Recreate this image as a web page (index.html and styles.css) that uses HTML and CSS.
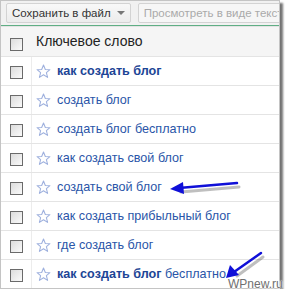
FILE: index.html
```html
<!DOCTYPE html>
<html lang="ru">
<head>
    <meta charset="UTF-8">
    <title>Ключевые слова</title>
    <link rel="stylesheet" href="styles.css">
</head>
<body>
    <div class="frame">
        <div class="toolbar">
            <button class="tool-btn">Сохранить в файл <span class="caret"></span></button>
            <button class="tool-btn tool-btn-muted">Просмотреть в виде текста</button>
        </div>
        <div class="table">
            <div class="row row-head">
                <div class="cell-check"><span class="checkbox"></span></div>
                <div class="cell-text">Ключевое слово</div>
            </div>
            <div class="row">
                <div class="cell-check"><span class="checkbox"></span></div>
                <div class="cell-text"><svg class="star" viewBox="0 0 14 14"><path d="M7 1 L8.7 5.1 L13 5.3 L9.7 8.1 L10.8 12.5 L7 10.1 L3.2 12.5 L4.3 8.1 L1 5.3 L5.3 5.1 Z"/></svg><a class="kw"><b>как создать блог</b></a></div>
            </div>
            <div class="row">
                <div class="cell-check"><span class="checkbox"></span></div>
                <div class="cell-text"><svg class="star" viewBox="0 0 14 14"><path d="M7 1 L8.7 5.1 L13 5.3 L9.7 8.1 L10.8 12.5 L7 10.1 L3.2 12.5 L4.3 8.1 L1 5.3 L5.3 5.1 Z"/></svg><a class="kw">создать блог</a></div>
            </div>
            <div class="row">
                <div class="cell-check"><span class="checkbox"></span></div>
                <div class="cell-text"><svg class="star" viewBox="0 0 14 14"><path d="M7 1 L8.7 5.1 L13 5.3 L9.7 8.1 L10.8 12.5 L7 10.1 L3.2 12.5 L4.3 8.1 L1 5.3 L5.3 5.1 Z"/></svg><a class="kw">создать блог бесплатно</a></div>
            </div>
            <div class="row">
                <div class="cell-check"><span class="checkbox"></span></div>
                <div class="cell-text"><svg class="star" viewBox="0 0 14 14"><path d="M7 1 L8.7 5.1 L13 5.3 L9.7 8.1 L10.8 12.5 L7 10.1 L3.2 12.5 L4.3 8.1 L1 5.3 L5.3 5.1 Z"/></svg><a class="kw">как создать свой блог</a></div>
            </div>
            <div class="row">
                <div class="cell-check"><span class="checkbox"></span></div>
                <div class="cell-text"><svg class="star" viewBox="0 0 14 14"><path d="M7 1 L8.7 5.1 L13 5.3 L9.7 8.1 L10.8 12.5 L7 10.1 L3.2 12.5 L4.3 8.1 L1 5.3 L5.3 5.1 Z"/></svg><a class="kw">создать свой блог</a></div>
            </div>
            <div class="row">
                <div class="cell-check"><span class="checkbox"></span></div>
                <div class="cell-text"><svg class="star" viewBox="0 0 14 14"><path d="M7 1 L8.7 5.1 L13 5.3 L9.7 8.1 L10.8 12.5 L7 10.1 L3.2 12.5 L4.3 8.1 L1 5.3 L5.3 5.1 Z"/></svg><a class="kw">как создать прибыльный блог</a></div>
            </div>
            <div class="row">
                <div class="cell-check"><span class="checkbox"></span></div>
                <div class="cell-text"><svg class="star" viewBox="0 0 14 14"><path d="M7 1 L8.7 5.1 L13 5.3 L9.7 8.1 L10.8 12.5 L7 10.1 L3.2 12.5 L4.3 8.1 L1 5.3 L5.3 5.1 Z"/></svg><a class="kw">где создать блог</a></div>
            </div>
            <div class="row">
                <div class="cell-check"><span class="checkbox"></span></div>
                <div class="cell-text"><svg class="star" viewBox="0 0 14 14"><path d="M7 1 L8.7 5.1 L13 5.3 L9.7 8.1 L10.8 12.5 L7 10.1 L3.2 12.5 L4.3 8.1 L1 5.3 L5.3 5.1 Z"/></svg><a class="kw"><b>как создать блог</b> бесплатно</a></div>
            </div>
        </div>

        <!-- arrows drawn over the list -->
        <svg class="arrows" width="285" height="293" viewBox="0 0 285 293">
            <g fill="none" stroke="rgba(0,0,0,0.25)" stroke-width="3" stroke-linecap="round">
                <path d="M238 186 L180 191"/>
                <path d="M262 256 L236 275"/>
            </g>
            <g fill="none" stroke="#1010d8" stroke-width="2.5" stroke-linecap="round">
                <path d="M236 182 L178 187"/>
                <path d="M260 252 L233 271"/>
            </g>
            <g fill="#1010d8">
                <path d="M169 188 L182 181 L183 193 Z"/>
                <path d="M225 277 L229 264 L238 274 Z"/>
            </g>
        </svg>
    </div>
    <div class="watermark">WPnew.ru</div>
</body>
</html>
```

FILE: styles.css
```css
body {
    margin: 0;
    position: relative;
    background: #fff;
    font-family: 'Liberation Sans', Arial, sans-serif;
}

.frame {
    position: relative;
    width: 278px;
    height: 287px;
    border: 1px solid #c4c4c4;
    box-shadow: 3px 3px 2px rgba(0, 0, 0, 0.55);
    overflow: hidden;
    background: #fff;
}

.toolbar {
    display: flex;
    gap: 7px;
    height: 25px;
    padding: 2px 0 0 5px;
    box-sizing: border-box;
    background: #f1f1f1;
    border-bottom: 1px solid #5fae84;
    white-space: nowrap;
    overflow: hidden;
}

.tool-btn {
    height: 20px;
    padding: 0 5px;
    border: 1px solid #d3d3d3;
    border-radius: 2px;
    background: linear-gradient(#f8f8f8, #ececec);
    font-family: 'Liberation Sans', Arial, sans-serif;
    font-size: 11.5px;
    color: #333;
    display: flex;
    align-items: center;
    flex-shrink: 0;
}

.tool-btn-muted {
    color: #aaa;
    background: #f6f6f6;
}

.caret {
    display: inline-block;
    margin-left: 6px;
    border-left: 4px solid transparent;
    border-right: 4px solid transparent;
    border-top: 4px solid #777;
}

.table {
    border-top: 1px solid #e3e3e3;
}

.row {
    display: flex;
    height: 28px;
    border-bottom: 1px solid #e4e4e4;
}

.row-head {
    height: 29px;
    background: #f5f5f5;
}

.cell-check {
    width: 31px;
    border-right: 1px solid #ececec;
    display: flex;
    align-items: center;
    justify-content: center;
    padding-top: 2px;
    box-sizing: border-box;
}

.row-head .cell-check {
    border-right: none;
    padding-top: 6px;
}

.checkbox {
    width: 11px;
    height: 11px;
    border: 1px solid #6a6a6a;
    background: linear-gradient(135deg, #dcdcdc, #fafafa);
}

.cell-text {
    display: flex;
    align-items: center;
    padding-left: 4px;
    font-size: 12.6px;
    color: #222;
    white-space: nowrap;
}

.row-head .cell-text {
    font-size: 14px;
    padding-bottom: 2px;
}

.star {
    width: 15px;
    height: 15px;
    margin-right: 6px;
    fill: #fff;
    stroke: #9fb1de;
    stroke-width: 1;
    stroke-linejoin: round;
}

.kw {
    color: #2a55a8;
}

.kw b {
    color: #1d4596;
}

.arrows {
    position: absolute;
    left: 0;
    top: 0;
    pointer-events: none;
}

.watermark {
    position: absolute;
    left: 228px;
    top: 277px;
    font-size: 12px;
    color: #6f6f6f;
    text-shadow: 0 0 2px #fff, 0 0 2px #fff, 0 0 1px #fff;
}
```
